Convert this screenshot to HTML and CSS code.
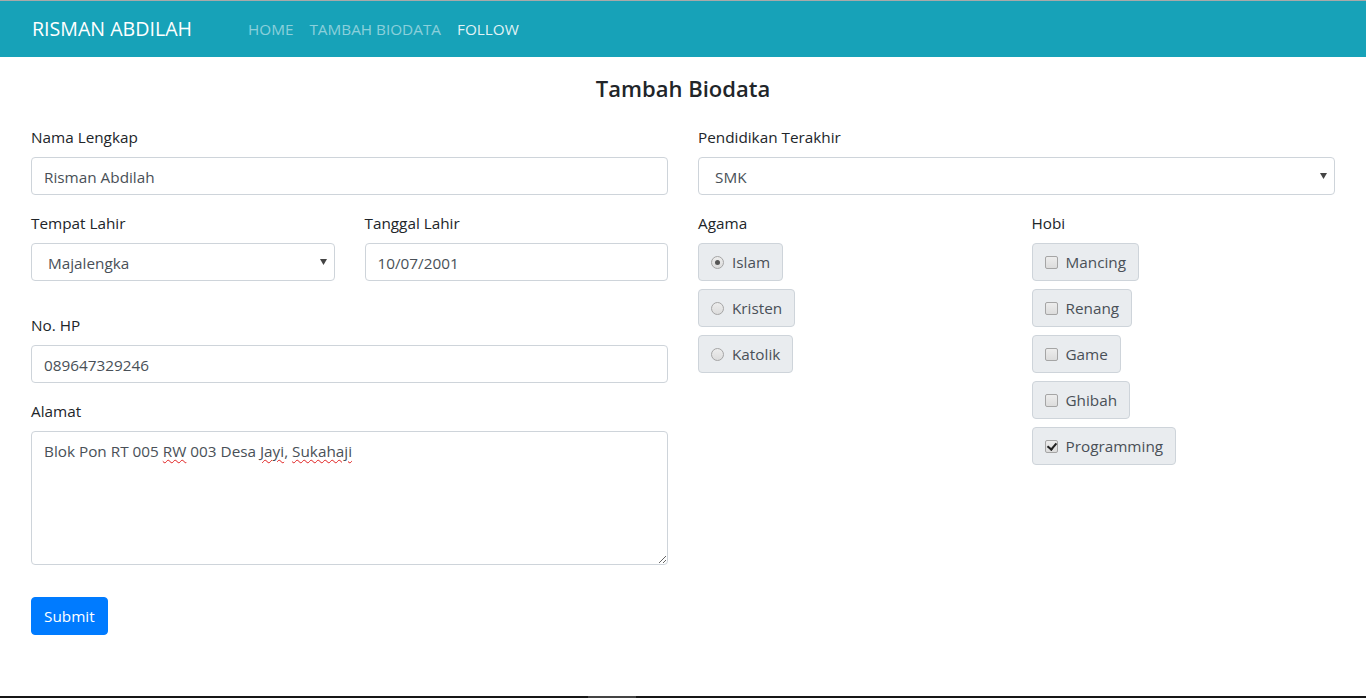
FILE: index.html
```html
<!DOCTYPE html>
<html lang="id">
<head>
<meta charset="utf-8">
<title>Tambah Biodata</title>
<link rel="stylesheet" href="styles.css">
</head>
<body>
<nav class="navbar">
  <a class="brand" href="#">RISMAN ABDILAH</a>
  <ul class="nav">
    <li><a class="nav-link" href="#">HOME</a></li>
    <li><a class="nav-link" href="#">TAMBAH BIODATA</a></li>
    <li><a class="nav-link active" href="#">FOLLOW</a></li>
  </ul>
</nav>

<main class="container">
  <h3 class="title">Tambah Biodata</h3>
  <form class="form">
    <div class="col">
      <div class="form-group">
        <label class="label">Nama Lengkap</label>
        <input class="control" type="text" value="Risman Abdilah">
      </div>
      <div class="form-row extra">
        <div class="form-group">
          <label class="label">Tempat Lahir</label>
          <select class="control select">
            <option>Majalengka</option>
          </select>
        </div>
        <div class="form-group">
          <label class="label">Tanggal Lahir</label>
          <input class="control" type="text" value="10/07/2001">
        </div>
      </div>
      <div class="form-group">
        <label class="label">No. HP</label>
        <input class="control" type="text" value="089647329246">
      </div>
      <div class="form-group extra">
        <label class="label">Alamat</label>
        <div class="control textarea">Blok Pon RT 005 <span class="spell">RW</span> 003 Desa <span class="spell">Jayi</span>, <span class="spell">Sukahaji</span></div>
      </div>
      <button type="button" class="btn">Submit</button>
    </div>

    <div class="col">
      <div class="form-group">
        <label class="label">Pendidikan Terakhir</label>
        <select class="control select">
          <option>SMK</option>
        </select>
      </div>
      <div class="form-row">
        <div class="form-group">
          <label class="label">Agama</label>
          <div class="choices">
            <label class="choice"><input type="radio" name="agama" class="radio" checked><span>Islam</span></label>
            <label class="choice"><input type="radio" name="agama" class="radio"><span>Kristen</span></label>
            <label class="choice"><input type="radio" name="agama" class="radio"><span>Katolik</span></label>
          </div>
        </div>
        <div class="form-group">
          <label class="label">Hobi</label>
          <div class="choices">
            <label class="choice"><input type="checkbox" class="check"><span>Mancing</span></label>
            <label class="choice"><input type="checkbox" class="check"><span>Renang</span></label>
            <label class="choice"><input type="checkbox" class="check"><span>Game</span></label>
            <label class="choice"><input type="checkbox" class="check"><span>Ghibah</span></label>
            <label class="choice"><input type="checkbox" class="check" checked><span>Programming</span></label>
          </div>
        </div>
      </div>
    </div>
  </form>
</main>

<div class="taskbar"><span class="taskbar-item"></span></div>
</body>
</html>
```

FILE: styles.css
```css
* { box-sizing: border-box; }

html, body {
  margin: 0;
  padding: 0;
  background: #fff;
}

body {
  font-family: "Open Sans", "Noto Sans", sans-serif;
  font-size: 15.3px;
  line-height: 24px;
  color: #212529;
  height: 698px;
  overflow: hidden;
}

.navbar {
  display: flex;
  align-items: center;
  height: 57px;
  border-top: 1px solid #a9a9a9;
  background: #17a2b8;
  padding: 0 32px;
}

.brand {
  color: #fff;
  text-decoration: none;
  font-size: 19.6px;
  line-height: 30px;
  margin-right: 48px;
}

.nav {
  display: flex;
  list-style: none;
  margin: 0;
  padding: 0;
}

.nav-link {
  display: block;
  padding: 0 8px;
  font-size: 15.3px;
  color: rgba(255, 255, 255, 0.5);
  text-decoration: none;
}

.nav-link.active { color: rgba(255, 255, 255, 0.88); }

.container {
  padding: 0 31px;
}

.title {
  margin: 17px 0 22px;
  text-align: center;
  font-size: 22px;
  line-height: 29px;
  font-weight: 600;
  color: #212529;
}

.form {
  display: grid;
  grid-template-columns: 1fr 1fr;
  column-gap: 30px;
}

.form-row {
  display: grid;
  grid-template-columns: 1fr 1fr;
  column-gap: 30px;
}

.form-group {
  margin-bottom: 16px;
}

.extra { margin-bottom: 32px; }
.form-row.extra .form-group { margin-bottom: 0; }

.label {
  display: block;
  margin-bottom: 8px;
  line-height: 24px;
}

.control {
  display: block;
  width: 100%;
  height: 38px;
  padding: 7px 12px 5px;
  font-family: inherit;
  font-size: 15.3px;
  line-height: 24px;
  color: #495057;
  background: #fff;
  border: 1px solid #ced4da;
  border-radius: 4px;
  outline: none;
}

.select {
  appearance: none;
  -webkit-appearance: none;
  padding-left: 16px;
  background-image: url("data:image/svg+xml,%3Csvg xmlns='http://www.w3.org/2000/svg' width='7' height='6'%3E%3Cpath d='M0 0h7L3.5 6z' fill='%23444'/%3E%3C/svg%3E");
  background-repeat: no-repeat;
  background-position: right 7px center;
  background-size: 7px 6px;
}

.textarea {
  height: 134px;
  resize: vertical;
  overflow: auto;
  color: #495057;
}

.spell {
  text-decoration: underline wavy #e02020;
  text-decoration-thickness: 1px;
  text-underline-offset: 2px;
}

.btn {
  display: inline-block;
  height: 38px;
  padding: 0 12px;
  font-family: inherit;
  font-size: 15.3px;
  color: #fff;
  background: #007bff;
  border: 1px solid #007bff;
  border-radius: 4px;
}

.choices {
  display: flex;
  flex-direction: column;
  align-items: flex-start;
  gap: 8px;
}

.choice {
  display: inline-flex;
  align-items: center;
  height: 38px;
  padding: 0 12px 0 12px;
  background: #e9ecef;
  border: 1px solid #ced4da;
  border-radius: 4px;
  color: #495057;
  gap: 8px;
}

.radio, .check {
  appearance: none;
  -webkit-appearance: none;
  margin: 0;
  width: 13px;
  height: 13px;
  border: 1px solid #a5a5a5;
  background: linear-gradient(#ededed, #dcdcdc);
  position: relative;
  flex: none;
}

.radio { border-radius: 50%; }
.radio:checked::after {
  content: "";
  position: absolute;
  left: 3px;
  top: 3px;
  width: 5px;
  height: 5px;
  border-radius: 50%;
  background: #555;
}

.check { border-radius: 2px; }
.check:checked::after {
  content: "";
  position: absolute;
  left: 3px;
  top: 0px;
  width: 4px;
  height: 7px;
  border: solid #222;
  border-width: 0 2px 2px 0;
  transform: rotate(40deg);
}

.taskbar {
  position: fixed;
  left: 0;
  right: 0;
  bottom: 0;
  height: 2px;
  background: #171717;
}

.taskbar-item {
  position: absolute;
  left: 588px;
  width: 48px;
  top: 0;
  bottom: 0;
  background: #444;
}
```
